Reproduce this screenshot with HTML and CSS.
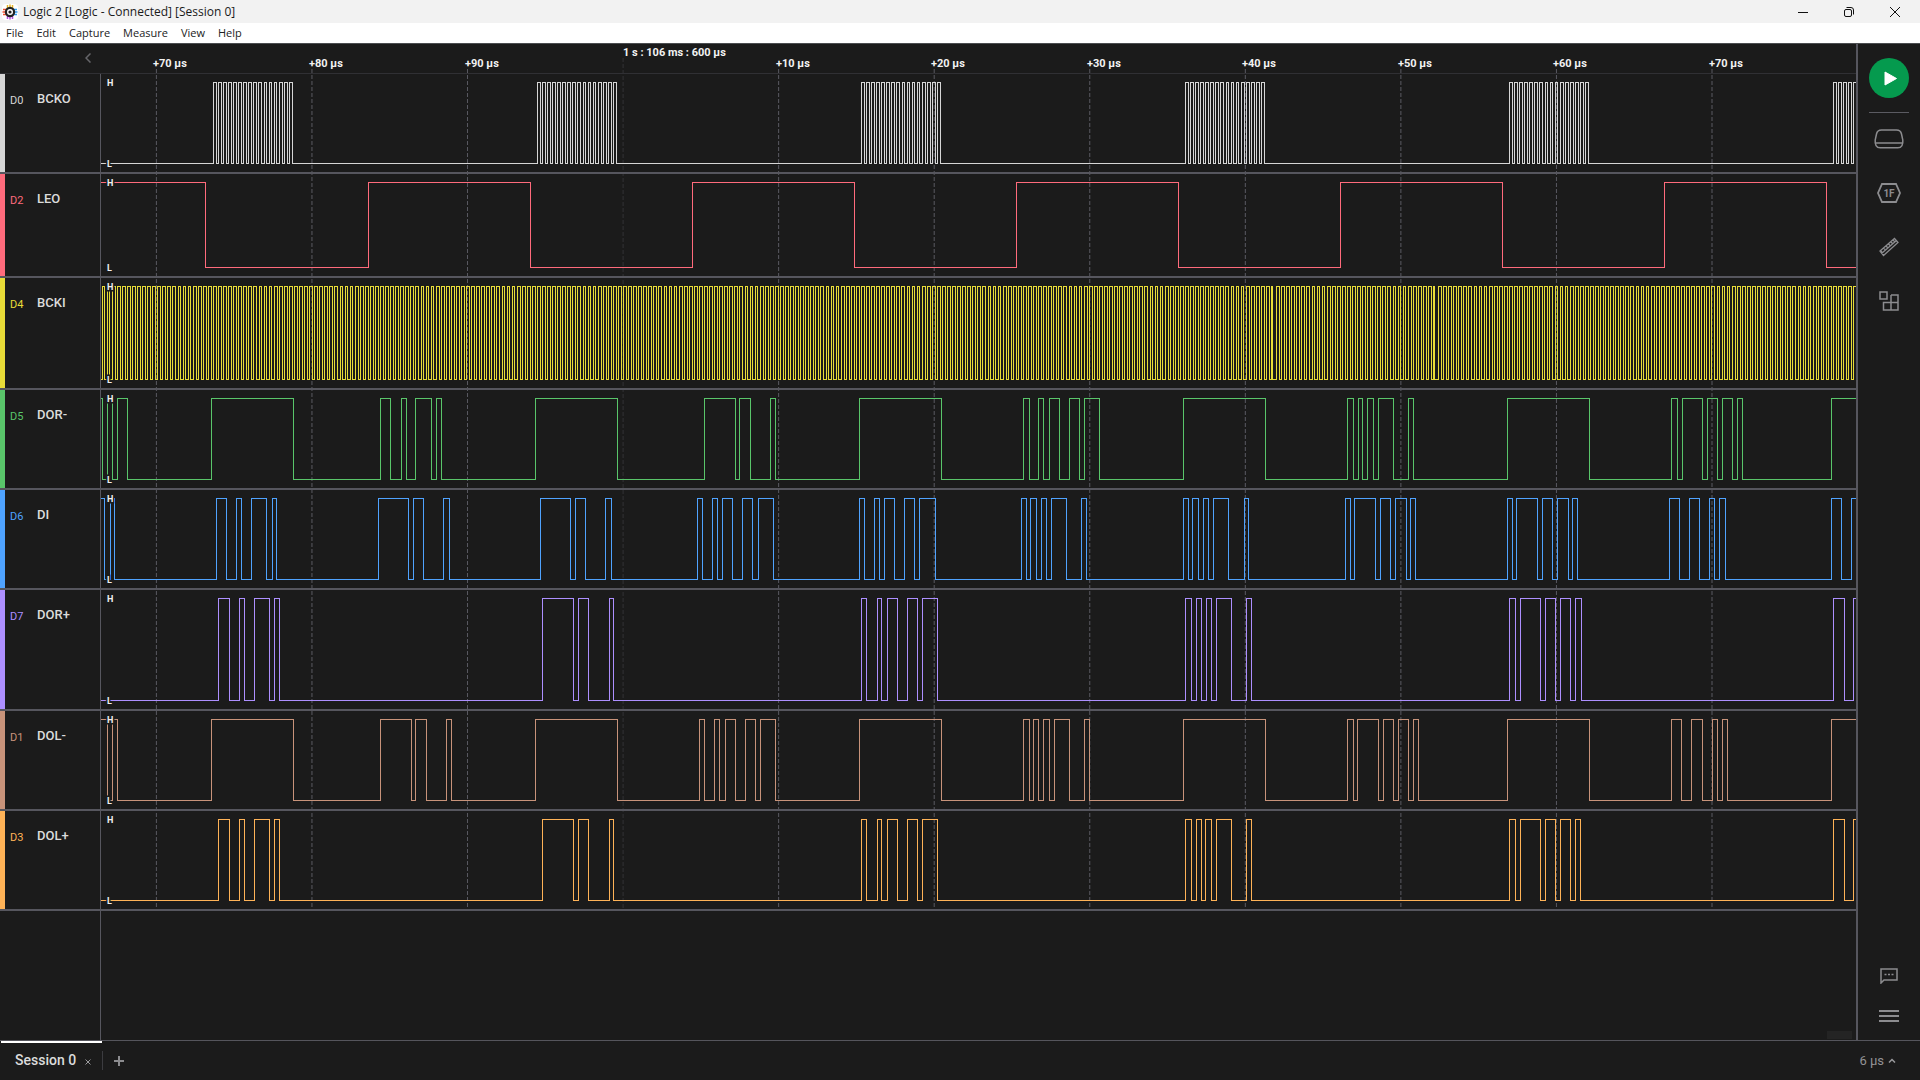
FILE: index.html
```html
<!DOCTYPE html>
<html lang="en">
<head>
<meta charset="utf-8">
<title>Logic 2 [Logic - Connected] [Session 0]</title>
<link rel="stylesheet" href="styles.css">
</head>
<body>
<div class="app">
  <header class="titlebar">
    <svg class="app-icon" width="16" height="16" viewBox="0 0 16 16" aria-hidden="true">
      <rect width="16" height="16" rx="4" fill="#fff"/>
      <path d="M5.500 1v3M8 .5v3M10.500 1v3" stroke="#e8b423" stroke-width="1.500"/>
      <path d="M5.500 12v3M8 12.500v3M10.500 12v3" stroke="#b14fe0" stroke-width="1.500"/>
      <path d="M1 5.500h3M.5 8h3M1 10.500h3" stroke="#f0502f" stroke-width="1.500"/>
      <path d="M12 5.500h3M12.500 8h3M12 10.500h3" stroke="#2f9bef" stroke-width="1.500"/>
      <circle cx="8" cy="8" r="5.200" fill="#222"/>
      <circle cx="8" cy="8" r="2.300" fill="none" stroke="#fff" stroke-width="1.400"/>
    </svg>
    <span class="title">Logic 2 [Logic - Connected] [Session 0]</span>
    <div class="window-controls">
      <button type="button" aria-label="Minimize"><svg width="10" height="10" viewBox="0 0 10 10"><path d="M0 5.500h10"/></svg></button>
      <button type="button" aria-label="Restore"><svg width="10" height="10" viewBox="0 0 10 10"><rect x=".5" y="2.500" width="7" height="7" rx="1.500"/><path d="M2.500 .5h4.500a2.500 2.500 0 0 1 2.500 2.500v4.500"/></svg></button>
      <button type="button" aria-label="Close"><svg width="10" height="10" viewBox="0 0 10 10"><path d="M0 0l10 10M10 0L0 10"/></svg></button>
    </div>
  </header>

  <nav class="menubar">
    <button type="button">File</button>
    <button type="button">Edit</button>
    <button type="button">Capture</button>
    <button type="button">Measure</button>
    <button type="button">View</button>
    <button type="button">Help</button>
  </nav>

  <div class="workspace">
    <main class="capture">
      <div class="ruler">
        <button class="collapse" type="button" aria-label="Collapse channel list"><svg width="6" height="10" viewBox="0 0 6 10"><path d="M5.500 .5L1 5l4.500 4.500" fill="none" stroke="#66666a" stroke-width="1.500"/></svg></button>
      </div>
      <div class="channels">
        <section class="channel white" data-signal="bcko"><div class="label"><span class="pin">D0</span><span class="name">BCKO</span></div><div class="plot"></div></section>
        <section class="channel red tall" data-signal="leo"><div class="label"><span class="pin">D2</span><span class="name">LEO</span></div><div class="plot"></div></section>
        <section class="channel yellow taller" data-signal="bcki"><div class="label"><span class="pin">D4</span><span class="name">BCKI</span></div><div class="plot"></div></section>
        <section class="channel green" data-signal="dorMinus"><div class="label"><span class="pin">D5</span><span class="name">DOR-</span></div><div class="plot"></div></section>
        <section class="channel blue" data-signal="di"><div class="label"><span class="pin">D6</span><span class="name">DI</span></div><div class="plot"></div></section>
        <section class="channel purple tallest" data-signal="dorPlus"><div class="label"><span class="pin">D7</span><span class="name">DOR+</span></div><div class="plot"></div></section>
        <section class="channel brown" data-signal="dolMinus"><div class="label"><span class="pin">D1</span><span class="name">DOL-</span></div><div class="plot"></div></section>
        <section class="channel orange" data-signal="dolPlus"><div class="label"><span class="pin">D3</span><span class="name">DOL+</span></div><div class="plot"></div></section>
      </div>
      <div class="empty"><div class="empty-label"></div><div class="scroll-thumb"></div></div>
      <svg class="timeline" aria-hidden="true"></svg>
    </main>

    <aside class="sidebar">
      <button class="play" type="button" aria-label="Start capture"><svg width="40" height="40" viewBox="0 0 40 40"><path d="M16 14l11.500 6.500L16 27z" fill="#fff" stroke="#fff" stroke-linejoin="round"/></svg></button>
      <hr>
      <div class="tools">
        <button type="button" aria-label="Device settings"><svg width="30" height="20" viewBox="0 0 30 20"><path d="M7.500 1h15c3.500 0 4.500 1.500 5 4l1.300 6c.4 4.500-1 7.800-5 7.800H6.200c-4 0-5.400-3.300-5-7.800L2.500 5C3 2.500 4 1 7.500 1zM1.500 14h27" stroke-width="1.500"/></svg></button>
        <button type="button" aria-label="Analyzers"><svg width="24" height="20" viewBox="0 0 24 20"><path d="M5 1h14l4 9-4 9H5l-4-9z" stroke-width="1.800"/><text x="12" y="14" text-anchor="middle">1F</text></svg></button>
        <button type="button" aria-label="Measurements"><svg width="20" height="20" viewBox="0 0 20 20"><path d="M1 14L15.500 1.500 19 5.500 4.500 18.500zM1.800 15.200L3 14M2.500 16.500L17.500 3.500M4.500 11l1.500 1.500M7 9l1.500 1.500M9.500 7L11 8.500M12 5l1.500 1.500M14 3l1.500 1.500" stroke-width="1.300"/></svg></button>
        <button type="button" aria-label="Extensions"><svg width="20" height="20" viewBox="0 0 20 20"><path d="M1 1h7v7H1zM12 4h7v15H4.500v-7.500H19M12 4v15" stroke-width="1.500"/></svg></button>
      </div>
      <div class="tools-bottom">
        <button type="button" aria-label="Feedback"><svg width="18" height="16" viewBox="0 0 18 16"><path d="M1 15V1h16v11H4z" stroke-width="1.500"/><path d="M4.500 6.500h2M8 6.500h2M11.500 6.500h2" stroke-width="1.500"/></svg></button>
        <button type="button" aria-label="Main menu"><svg width="20" height="14" viewBox="0 0 20 14"><path d="M0 2h20M0 7h20M0 12h20" stroke-width="2"/></svg></button>
      </div>
    </aside>
  </div>

  <footer class="statusbar">
    <div class="tab">
      <span>Session 0</span>
      <button type="button" aria-label="Close session"><svg width="6" height="6" viewBox="0 0 6 6"><path d="M.5 .5l5 5M5.500 .5l-5 5" stroke="#99999c"/></svg></button>
    </div>
    <button class="add" type="button" aria-label="New session"><svg width="10" height="10" viewBox="0 0 10 10"><path d="M5 0v10M0 5h10" stroke="#8c8c8f" stroke-width="2"/></svg></button>
    <button class="span" type="button">6 µs <svg width="8" height="5" viewBox="0 0 8 5"><path d="M1 4.500l3-3 3 3" fill="none" stroke="#99999c" stroke-width="1.500"/></svg></button>
  </footer>
</div>
<script src="script.js"></script>
</body>
</html>
```

FILE: styles.css
```css
* { box-sizing: border-box; }

body {
  margin: 0;
  background: #1b1b1b;
  color: #dcdcdc;
  font-family: Roboto, "Liberation Sans", sans-serif;
  font-size: 13px;
}

button {
  margin: 0;
  padding: 0;
  border: 0;
  background: none;
  color: inherit;
  font: inherit;
}

svg { display: block; }

.app {
  display: flex;
  flex-direction: column;
  min-height: 100vh;
}

.titlebar {
  display: flex;
  align-items: center;
  height: 23px;
  padding: 0 2px;
  background: #f2f2f2;
  color: #1a1a1a;
  font: 12px/22px "Open Sans", "Noto Sans", sans-serif;
}

.title { margin-left: 5px; }

.window-controls {
  display: flex;
  margin-left: auto;
}

.window-controls button {
  display: grid;
  place-items: center;
  width: 46px;
  height: 22px;
}

.window-controls svg {
  fill: none;
  stroke: #111;
}

.menubar {
  display: flex;
  gap: 13px;
  height: 20px;
  padding-left: 6px;
  background: #fff;
  color: #222;
  font: 11px/20px "Open Sans", "Noto Sans", sans-serif;
}

.workspace {
  display: flex;
  flex: 1;
  border-top: 1px solid #4b4d50;
  border-bottom: 1px solid #55555c;
}

.capture {
  position: relative;
  display: flex;
  flex: 1;
  flex-direction: column;
  min-width: 0;
}

.ruler {
  height: 30px;
  border-bottom: 1px solid #303034;
}

.collapse {
  display: block;
  padding: 9px 0 0 85px;
}

.channel {
  --signal: #d6d6d6;
  display: grid;
  grid-template-columns: 101px 1fr;
  height: 100px;
  border-bottom: 2px solid #56565e;
}

.tall { height: 104px; }
.taller { height: 112px; }
.tallest { height: 121px; }

.red { --signal: #ff6b7c; }
.yellow { --signal: #e8dc38; }
.green { --signal: #59c56a; }
.blue { --signal: #4fa3ff; }
.purple { --signal: #ad8fff; }
.brown { --signal: #c8937a; }
.orange { --signal: #ffb357; }

.label {
  display: flex;
  align-items: flex-start;
  padding: 17px 0 0 5px;
  border-left: 5px solid var(--signal);
  border-right: 1px solid #56565e;
}

.pin {
  width: 27px;
  color: var(--signal);
  font-size: 11px;
  line-height: 20px;
}

.name {
  font-weight: 500;
  line-height: 16px;
}

.plot {
  min-width: 0;
  overflow: hidden;
}

.plot svg {
  width: 100%;
  height: 100%;
}

.wave {
  fill: none;
  stroke: var(--signal);
  stroke-width: 1px;
  shape-rendering: crispEdges;
}

.level {
  fill: #f0f0f0;
  stroke: #1b1b1b;
  stroke-width: 3px;
  paint-order: stroke;
  font-size: 9px;
  font-weight: 700;
}

.timeline {
  position: absolute;
  inset: 0 0 auto 101px;
  z-index: -1;
  width: calc(100% - 101px);
  height: 866px;
}

.tick { stroke: #5a5a62; stroke-dasharray: 4 2; }
.tick.major { stroke: #323236; }
.tick-label { fill: #f2f2f2; font-size: 11px; font-weight: 700; }

.empty {
  display: flex;
  flex: 1;
  align-items: flex-end;
  justify-content: space-between;
}

.empty-label {
  align-self: stretch;
  width: 101px;
  border-right: 1px solid #56565e;
}

.scroll-thumb {
  width: 25px;
  height: 8px;
  margin: 0 4px 1px 0;
  background: #242424;
}

.sidebar {
  display: flex;
  flex-direction: column;
  align-items: center;
  width: 64px;
  padding: 14px 0 17px;
  border-left: 2px solid #56565e;
}

.play {
  border-radius: 50%;
  background: #059a4e;
}

.sidebar hr {
  width: 40px;
  height: 1px;
  margin: 14px 0 0;
  border: 0;
  background: #5b5b62;
}

.tools,
.tools-bottom {
  display: grid;
  justify-items: center;
  fill: none;
  stroke: #8c8c8f;
}

.tools {
  gap: 34px;
  margin-top: 16px;
}

.tools text {
  fill: #8c8c8f;
  stroke: none;
  font-size: 10px;
  font-weight: 700;
}

.tools-bottom {
  gap: 25px;
  margin-top: auto;
}

.statusbar {
  display: flex;
  height: 39px;
}

.tab {
  display: flex;
  gap: 9px;
  align-items: center;
  width: 101px;
  margin-left: 1px;
  padding: 0 0 4px 14px;
  border-top: 2px solid #fff;
  font-size: 14px;
  font-weight: 500;
}

.tab button { padding-top: 4px; }

.add {
  align-self: flex-start;
  height: 19px;
  margin-top: 10px;
  padding: 0 11px;
  border-left: 1px solid #3c3c40;
}

.span {
  display: flex;
  gap: 4px;
  align-items: center;
  margin-left: auto;
  padding: 0 24px 0 0;
  color: #939396;
}
```

FILE: script.js
```js
const SVG = 'http://www.w3.org/2000/svg';
const ORIGIN = 101;
const END = 4000;
const BIT = 324 / 64;
const FRAME = 324.05;

function clock() {
  const edges = [];
  for (let i = 0; i < 347; i++) {
    const rise = Math.floor(102.1 + BIT * i);
    const narrow = rise === 1271 || rise === 1433;
    edges.push(rise, narrow ? rise + 1 : Math.floor(104.9 + BIT * i));
  }
  return edges;
}

function bursts() {
  const edges = [];
  for (let b = 0; b < 6; b++) {
    for (let i = 0; i < 16; i++) {
      const x = 213.4 + FRAME * b + BIT * i;
      edges.push(Math.floor(x), Math.floor(x + 2.8));
    }
  }
  return edges;
}

// Each signal is its level at the left edge and the positions where it toggles.
const signals = {
  bcko: [0, bursts()],
  leo: [1, [205, 368, 530, 692, 854, 1016, 1178, 1340, 1502, 1664, 1826]],
  bcki: [0, clock()],
  dorMinus: [1, [102, 107, 112, 117, 127, 211, 293, 380, 390, 401, 406, 415, 431, 436, 441, 535, 617,
    704, 735, 739, 750, 770, 775, 859, 941, 1023, 1029, 1038, 1043, 1049, 1059, 1069, 1079, 1084, 1099,
    1183, 1265, 1347, 1353, 1358, 1362, 1367, 1373, 1378, 1393, 1408, 1413, 1507, 1589,
    1671, 1677, 1682, 1702, 1707, 1717, 1722, 1732, 1737, 1742, 1831]],
  di: [1, [104, 110, 114, 216, 226, 236, 241, 251, 266, 272, 276, 378, 408, 413, 423, 443, 449,
    540, 570, 575, 585, 605, 611, 697, 702, 712, 717, 722, 732, 742, 752, 758, 773,
    859, 864, 874, 879, 884, 894, 904, 914, 919, 935, 1021, 1026, 1030, 1036, 1041, 1046, 1051, 1066, 1081, 1086,
    1183, 1188, 1192, 1198, 1203, 1208, 1213, 1228, 1244, 1248, 1345, 1350, 1354, 1375, 1380, 1390, 1395, 1406, 1410, 1415,
    1507, 1512, 1516, 1537, 1542, 1552, 1557, 1568, 1572, 1577, 1669, 1679, 1689, 1699, 1709, 1714, 1719, 1725,
    1831, 1841, 1851]],
  dorPlus: [0, [218, 229, 239, 244, 254, 269, 274, 279, 542, 573, 578, 588, 609, 613,
    861, 866, 877, 881, 887, 897, 907, 917, 922, 937, 1185, 1191, 1196, 1201, 1206, 1211, 1216, 1231, 1246, 1251,
    1509, 1515, 1520, 1540, 1545, 1555, 1560, 1570, 1575, 1581, 1833, 1844, 1853]],
  dolMinus: [1, [107, 112, 117, 211, 293, 380, 411, 415, 426, 446, 451, 535, 617,
    699, 704, 714, 719, 725, 735, 745, 755, 760, 775, 859, 941, 1023, 1029, 1033, 1038, 1043, 1049, 1054, 1069, 1084, 1089,
    1183, 1265, 1347, 1353, 1357, 1378, 1383, 1393, 1398, 1408, 1413, 1418, 1507, 1589,
    1671, 1681, 1691, 1702, 1712, 1717, 1722, 1727, 1831]],
  dolPlus: [0, [218, 229, 239, 244, 254, 269, 274, 279, 542, 573, 578, 588, 609, 613,
    861, 866, 877, 881, 887, 897, 907, 917, 922, 937, 1185, 1191, 1196, 1201, 1205, 1211, 1216, 1231, 1246, 1251,
    1509, 1515, 1520, 1540, 1545, 1555, 1560, 1570, 1575, 1580, 1833, 1844, 1853]]
};

function add(parent, name, attributes, text) {
  const node = document.createElementNS(SVG, name);
  for (const key in attributes) node.setAttribute(key, attributes[key]);
  if (text) node.textContent = text;
  parent.appendChild(node);
  return node;
}

for (const channel of document.querySelectorAll('.channel')) {
  const plot = channel.querySelector('.plot');
  const high = 8.5;
  const low = plot.clientHeight - 8.5;
  let [level, edges] = signals[channel.dataset.signal];
  let d = `M0 ${level ? high : low}`;
  for (const x of edges) {
    level = !level;
    d += `H${x - ORIGIN + 0.5}V${level ? high : low}`;
  }
  d += `H${END}`;
  const svg = add(plot, 'svg', {});
  add(svg, 'path', { class: 'wave', d });
  add(svg, 'text', { class: 'level', x: 6, y: 12 }, 'H');
  add(svg, 'text', { class: 'level', x: 6, y: low + 3.5 }, 'L');
}

const timeline = document.querySelector('.timeline');
['+70 µs', '+80 µs', '+90 µs', '1 s : 106 ms : 600 µs', '+10 µs', '+20 µs', '+30 µs', '+40 µs', '+50 µs', '+60 µs', '+70 µs']
  .forEach((text, i) => {
    const x = 55.4 + 155.56 * i;
    const major = !text.startsWith('+');
    add(timeline, 'line', { class: major ? 'tick major' : 'tick', x1: x, x2: x, y1: major ? 14 : 25, y2: 866 });
    add(timeline, 'text', { class: 'tick-label', x: Math.round(major ? x : x - 3), y: major ? 12 : 23 }, text);
  });
```
